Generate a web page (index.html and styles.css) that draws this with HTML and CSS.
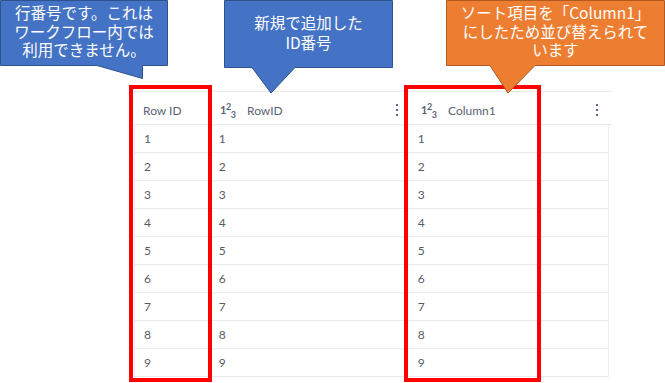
FILE: index.html
```html
<!DOCTYPE html>
<html lang="ja">
<head>
    <meta charset="UTF-8">
    <title>Row ID と RowID</title>
    <link rel="stylesheet" href="styles.css">
</head>
<body>
    <!-- テーブル -->
    <div class="table">
        <div class="head">
            <div class="cell c-id"><span class="title">Row ID</span></div>
            <div class="cell c-a">
                <span class="num-icon">1<sup>2</sup><sub>3</sub></span>
                <span class="title">RowID</span>
                <span class="kebab"><i></i><i></i><i></i></span>
            </div>
            <div class="cell c-b">
                <span class="num-icon">1<sup>2</sup><sub>3</sub></span>
                <span class="title">Column1</span>
                <span class="kebab"><i></i><i></i><i></i></span>
            </div>
        </div>
        <div class="body" id="rows"></div>
    </div>

    <!-- 赤枠 -->
    <div class="mark mark-id"></div>
    <div class="mark mark-col"></div>

    <!-- 吹き出し -->
    <div class="callout callout-left">
        <svg width="170" height="82" viewBox="0 0 170 82">
            <path d="M0.5 0.5 H167.5 V65.5 H142.5 V78.5 L97 65.5 H0.5 Z" />
        </svg>
        <div class="text">
            <p>行番号です。これは</p>
            <p>ワークフロー内では</p>
            <p>利用できません。</p>
        </div>
    </div>
    <div class="callout callout-mid">
        <svg width="170" height="96" viewBox="0 0 170 96">
            <path d="M0.5 0.5 H168.5 V67.5 H71 L47 93 L28 67.5 H0.5 Z" />
        </svg>
        <div class="text">
            <p>新規で追加した</p>
            <p>ID番号</p>
        </div>
    </div>
    <div class="callout callout-right orange">
        <svg width="220" height="96" viewBox="0 0 220 96">
            <path d="M0.5 0.5 H218.5 V65.5 H89 L62 93 L44 65.5 H0.5 Z" />
        </svg>
        <div class="text">
            <p>ソート項目を「Column1」</p>
            <p>にしたため並び替えられて</p>
            <p>います</p>
        </div>
    </div>

    <script>
        // 行を描画
        const rows = document.getElementById('rows');
        for (let i = 1; i <= 9; i++) {
            const row = document.createElement('div');
            row.className = 'row';
            row.innerHTML = `
                <div class="cell c-id">${i}</div>
                <div class="cell c-a">${i}</div>
                <div class="cell c-b">${i}</div>
            `;
            rows.appendChild(row);
        }
    </script>
</body>
</html>
```

FILE: styles.css
```css
/* ページ全体 */
body {
    margin: 0;
    background-color: #fff;
    font-family: Lato, "Noto Sans", sans-serif;
    color: #4f5563;
    position: relative;
    width: 665px;
    height: 383px;
    overflow: hidden;
}

/* テーブル */
.table {
    margin: 91px 0 0 134px;
    width: 478px;
}
.head {
    display: flex;
    height: 32px;
    border-top: 1px solid #e6e8ef;
    border-bottom: 1px solid #e6e8ef;
}
.head .cell {
    display: flex;
    align-items: center;
    padding-top: 4px;
    font-size: 12px;
    color: #5b6376;
}
.row {
    display: flex;
    height: 27px;
    border-bottom: 1px solid #e8e9ef;
}
.row .cell {
    display: flex;
    align-items: center;
    font-size: 12px;
    color: #575b64;
}
.c-id {
    width: 77px;
    padding-left: 9px;
    box-sizing: border-box;
}
.c-a {
    width: 198px;
    padding: 0 11px 0 7px;
    box-sizing: border-box;
}
.c-b {
    width: 203px;
    padding: 0 14px 0 9px;
    box-sizing: border-box;
}
.head .c-a {
    padding-left: 9px;
}
.head .c-b {
    padding-left: 12px;
}
.body {
    border-left: 1px solid #eceef3;
    border-right: 1px solid #eceef3;
    margin-right: 3px;
}
.row .c-b {
    width: 200px;
}

/* 数値型アイコン */
.num-icon {
    font-size: 11px;
    font-weight: bold;
    color: #5b6376;
    width: 27px;
    line-height: 1;
    letter-spacing: -0.5px;
}
.num-icon sup {
    font-size: 9px;
    vertical-align: 4px;
}
.num-icon sub {
    font-size: 9px;
    vertical-align: -4px;
}
.title {
    flex: 1;
}
.kebab {
    display: flex;
    flex-direction: column;
    gap: 3px;
}
.kebab i {
    display: block;
    width: 2px;
    height: 2px;
    background-color: #5b6a8c;
}

/* 赤枠 */
.mark {
    position: absolute;
    top: 85px;
    height: 297px;
    border: 4px solid #ff0000;
    box-sizing: border-box;
}
.mark-id {
    left: 129px;
    width: 83px;
}
.mark-col {
    left: 404px;
    width: 137px;
}

/* 吹き出し */
.callout {
    position: absolute;
    top: 0;
}
.callout svg {
    display: block;
}
.callout path {
    fill: #4472c4;
    stroke: #2f528f;
    stroke-width: 1;
}
.callout.orange path {
    fill: #ed7d31;
    stroke: #ae5a21;
}
.callout .text {
    position: absolute;
    top: 4px;
    left: 0;
    font-family: "Noto Sans CJK JP", sans-serif;
    font-size: 15.5px;
    color: #fff;
    text-align: center;
}
.callout .text p {
    margin: 0;
    height: 18.5px;
    line-height: 17px;
}
.callout-left {
    left: 0;
}
.callout-left .text {
    width: 168px;
}
.callout-mid {
    left: 224px;
}
.callout-mid .text {
    width: 169px;
    top: 14px;
}
.callout-mid .text p {
    height: 20px;
}
.callout-right {
    left: 446px;
}
.callout-right .text {
    width: 219px;
}
```
